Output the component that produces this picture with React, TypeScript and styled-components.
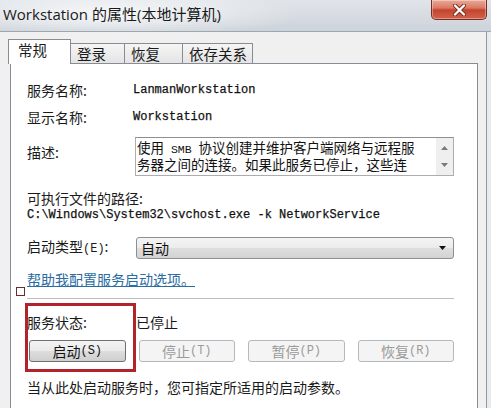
import React from "react";
import styled, { createGlobalStyle } from "styled-components";

const CJK = `"Noto Sans CJK SC", "Noto Sans", sans-serif`;
const MONO = `"Liberation Mono", "Noto Sans CJK SC", monospace`;

const GlobalStyle = createGlobalStyle`
  * { box-sizing: border-box; }
  html, body { margin: 0; padding: 0; background: #e9ecef; }
  body { width: 491px; height: 408px; overflow: hidden; font-family: ${CJK}; }
  #root { width: 491px; height: 408px; overflow: hidden; }
`;

const Window = styled.div`
  width: 491px;
  height: 408px;
  display: flex;
  flex-direction: column;
  overflow: hidden;
`;

const TitleBar = styled.div`
  flex: none;
  height: 32px;
  display: flex;
  justify-content: space-between;
  align-items: flex-start;
  padding: 0 4px 0 3px;
  border-bottom: 1px solid #9ea6ae;
  background: radial-gradient(ellipse 190px 24px at 110px 14px, rgba(255, 255, 255, 0.8), rgba(255, 255, 255, 0) 100%),
    linear-gradient(#e1e5ea, #cdd3da);
`;

const TitleText = styled.div`
  font-family: "Open Sans", "Noto Sans CJK SC", sans-serif;
  font-size: 15px;
  line-height: 28px;
  color: #1a1a1a;
  white-space: nowrap;
`;

const CloseButton = styled.div`
  width: 56px;
  height: 20px;
  display: flex;
  align-items: center;
  justify-content: center;
  border: 1px solid #7a2c22;
  border-top: none;
  border-radius: 0 0 5px 5px;
  background: linear-gradient(#eaa999 0%, #da7a63 42%, #c4442f 52%, #d1624a 100%);
  box-shadow: inset 0 0 0 1px rgba(255, 255, 255, 0.35);
`;

const Client = styled.div`
  flex: 1;
  width: 487px;
  border-right: 1px solid #8f979f;
  background: #f0f0f0;
  padding: 7px 0 0 10px;
  display: flex;
  flex-direction: column;
`;

const TabsRow = styled.div`
  display: flex;
  align-items: flex-end;
  height: 24px;
  margin-left: -2px;
  position: relative;
  z-index: 1;
`;

const Tab = styled.div<{ $active?: boolean; $w: number }>`
  width: ${(p) => p.$w}px;
  height: ${(p) => (p.$active ? 25 : 20)}px;
  margin-bottom: ${(p) => (p.$active ? -1 : 0)}px;
  margin-left: ${(p) => (p.$active ? 0 : -1)}px;
  border: 1px solid #898c95;
  border-bottom: none;
  background: ${(p) => (p.$active ? "#ffffff" : "linear-gradient(#f5f5f5, #e4e4e4)")};
  position: relative;
  z-index: ${(p) => (p.$active ? 2 : 1)};
  display: flex;
  align-items: ${(p) => (p.$active ? "flex-start" : "center")};
  padding-left: ${(p) => (p.$active ? 9 : 6)}px;
  font-size: 14.5px;
  line-height: 20px;
  color: #1a1a1a;
  white-space: nowrap;
`;

const Panel = styled.div`
  width: 468px;
  flex: 1;
  background: #ffffff;
  border: 1px solid #898c95;
  border-bottom: none;
  position: relative;
  padding: 16px 23px 0 16px;
  display: flex;
  flex-direction: column;
`;

const InfoRow = styled.div<{ $mt: number; $col?: number }>`
  display: grid;
  grid-template-columns: ${(p) => p.$col ?? 106}px minmax(0, 1fr);
  align-items: center;
  height: 20px;
  margin-top: ${(p) => p.$mt}px;
`;

const Label = styled.div`
  font-size: 14px;
  line-height: 20px;
  color: #1a1a1a;
  white-space: nowrap;
`;

const Accel = styled.span`
  font-family: ${MONO};
  font-size: 12px;
`;

const MonoValue = styled.div`
  font-family: ${MONO};
  font-size: 12px;
  line-height: 16px;
  color: #111;
  white-space: nowrap;
  -webkit-text-stroke: 0.25px #111;
`;

const DescRow = styled.div`
  display: grid;
  grid-template-columns: 108px minmax(0, 1fr);
  align-items: start;
  margin-top: 10px;
`;

const DescLabel = styled(Label)`
  margin-top: 5px;
`;

const TextBox = styled.div`
  height: 39px;
  min-width: 0;
  display: flex;
  border: 1px solid #abadb3;
  border-top-color: #8e8f91;
  background: #fff;
`;

const TextContent = styled.div`
  flex: 1;
  min-width: 0;
  padding: 2px 0 0 1px;
  font-size: 13.5px;
  line-height: 15px;
  color: #111;
  white-space: pre;
  overflow: hidden;
`;

const InlineMono = styled.span`
  font-family: ${MONO};
  font-size: 11.5px;
`;

const ScrollBar = styled.div`
  flex: none;
  width: 17px;
  background: #efefef;
  display: flex;
  flex-direction: column;
  justify-content: space-between;
  align-items: center;
  padding: 8px 0 8px;
`;

const PathLabel = styled(Label)`
  margin-top: 13px;
  line-height: 18px;
`;

const SelectRow = styled.div`
  display: grid;
  grid-template-columns: 109px minmax(0, 1fr);
  align-items: center;
  height: 22px;
  margin-top: 13px;
`;

const SelectBox = styled.div`
  height: 22px;
  display: flex;
  align-items: center;
  justify-content: space-between;
  padding: 0 7px 0 4px;
  border: 1px solid #8e8f8f;
  border-radius: 3px;
  background: linear-gradient(#f4f4f4 0%, #ececec 48%, #dedede 52%, #d3d3d3 100%);
  font-size: 14px;
  color: #111;
`;

const HelpLink = styled.a`
  align-self: flex-start;
  margin-top: 12px;
  font-size: 14px;
  line-height: 18px;
  color: #2b6ca3;
  text-decoration: underline;
  cursor: pointer;
`;

const Separator = styled.div`
  margin-top: 10px;
  height: 1px;
  background: #bdbdbd;
`;

const ButtonRow = styled.div`
  display: grid;
  grid-template-columns: repeat(4, 1fr);
  gap: 13px;
  height: 22px;
  margin: 8px 0 0 2px;
`;

const Button = styled.div<{ $disabled?: boolean }>`
  display: flex;
  align-items: center;
  justify-content: center;
  border-radius: 3px;
  border: 1px solid ${(p) => (p.$disabled ? "#b5b9bc" : "#707070")};
  background: ${(p) =>
    p.$disabled ? "#f4f4f4" : "linear-gradient(#f3f3f3 0%, #ebebeb 48%, #dddddd 52%, #cfcfcf 100%)"};
  color: ${(p) => (p.$disabled ? "#9a9a9a" : "#111")};
  font-size: 14px;
  white-space: nowrap;
`;

const Footnote = styled(Label)`
  margin-top: 15px;
`;

const Highlight = styled.div`
  position: absolute;
  left: 14px;
  top: 239px;
  width: 111px;
  height: 69px;
  border: 3px solid #b3232b;
`;

const Marker = styled.div`
  position: absolute;
  left: 5px;
  top: 223px;
  width: 9px;
  height: 9px;
  border: 1px solid #6a2d2d;
`;

const CloseGlyph = () => (
  <svg width="15" height="12" viewBox="0 0 15 12">
    <path d="M3 1.5 L12 10.5 M12 1.5 L3 10.5" stroke="#7a2a20" strokeWidth="4" strokeLinecap="round" />
    <path d="M3 1.5 L12 10.5 M12 1.5 L3 10.5" stroke="#ffffff" strokeWidth="2.3" strokeLinecap="round" />
  </svg>
);

const UpArrow = () => (
  <svg width="7" height="4" viewBox="0 0 7 4">
    <path d="M0 4 L3.5 0 L7 4 Z" fill="#7a7a7a" />
  </svg>
);

const DownArrow = ({ color = "#7a7a7a" }: { color?: string }) => (
  <svg width="7" height="4" viewBox="0 0 7 4">
    <path d="M0 0 L7 0 L3.5 4 Z" fill={color} />
  </svg>
);

export default function App() {
  return (
    <>
      <GlobalStyle />
      <Window>
        <TitleBar>
          <TitleText>Workstation 的属性(本地计算机)</TitleText>
          <CloseButton>
            <CloseGlyph />
          </CloseButton>
        </TitleBar>
        <Client>
          <TabsRow>
            <Tab $active $w={63}>常规</Tab>
            <Tab $w={55}>登录</Tab>
            <Tab $w={59}>恢复</Tab>
            <Tab $w={71}>依存关系</Tab>
          </TabsRow>
          <Panel>
            <InfoRow $mt={0}>
              <Label>服务名称:</Label>
              <MonoValue>LanmanWorkstation</MonoValue>
            </InfoRow>
            <InfoRow $mt={7}>
              <Label>显示名称:</Label>
              <MonoValue>Workstation</MonoValue>
            </InfoRow>
            <DescRow>
              <DescLabel>描述:</DescLabel>
              <TextBox>
                <TextContent>
                  使用<InlineMono> SMB </InlineMono>协议创建并维护客户端网络与远程服
                  {"\n"}务器之间的连接。如果此服务已停止，这些连
                </TextContent>
                <ScrollBar>
                  <UpArrow />
                  <DownArrow />
                </ScrollBar>
              </TextBox>
            </DescRow>
            <PathLabel>可执行文件的路径:</PathLabel>
            <MonoValue>C:\Windows\System32\svchost.exe -k NetworkService</MonoValue>
            <SelectRow>
              <Label>
                启动类型<Accel>(E)</Accel>:
              </Label>
              <SelectBox>
                <span>自动</span>
                <DownArrow color="#111" />
              </SelectBox>
            </SelectRow>
            <HelpLink>帮助我配置服务启动选项。</HelpLink>
            <Separator />
            <InfoRow $mt={13} $col={109}>
              <Label>服务状态:</Label>
              <Label>已停止</Label>
            </InfoRow>
            <ButtonRow>
              <Button>
                启动<Accel>(S)</Accel>
              </Button>
              <Button $disabled>
                停止<Accel>(T)</Accel>
              </Button>
              <Button $disabled>
                暂停<Accel>(P)</Accel>
              </Button>
              <Button $disabled>
                恢复<Accel>(R)</Accel>
              </Button>
            </ButtonRow>
            <Footnote>当从此处启动服务时，您可指定所适用的启动参数。</Footnote>
            <Highlight />
            <Marker />
          </Panel>
        </Client>
      </Window>
    </>
  );
}
